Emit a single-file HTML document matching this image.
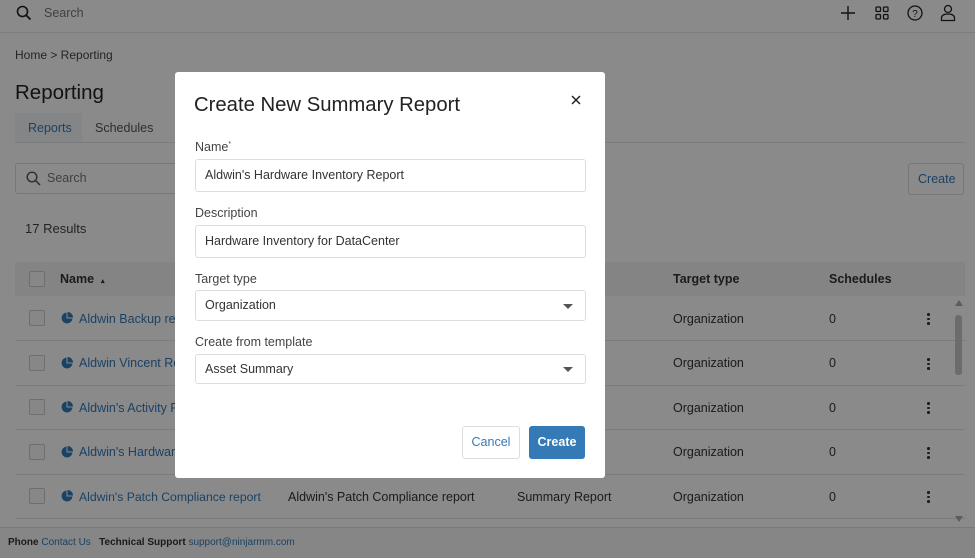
<!DOCTYPE html>
<html><head><meta charset="utf-8"><style>
*{box-sizing:border-box;margin:0;padding:0}
body{width:975px;height:558px;overflow:hidden;position:relative;background:#fff;font-family:"Liberation Sans",sans-serif;color:#333}
.abs{position:absolute}
.t{position:absolute;white-space:nowrap}
.link{color:#337ab7}
.row{position:absolute;left:15px;width:950px;height:45px;border-bottom:1px solid #e6e6e6}
.cb{position:absolute;left:14px;width:16px;height:16px;border:1px solid #ccc;border-radius:2px;background:#fafafa}
.overlay{position:absolute;left:0;top:0;width:975px;height:558px;background:rgba(0,0,0,0.46)}
.modal{position:absolute;left:175px;top:72px;width:430px;height:406px;background:#fff;border-radius:3px}
.lbl{position:absolute;left:20px;font-size:12.5px;color:#444}
.inp{position:absolute;left:20px;width:391px;border:1px solid #ddd;border-radius:3px;font-size:12.5px;color:#333;padding-left:9px}
.caret{position:absolute;right:12px;top:50%;margin-top:-2px;width:0;height:0;border-left:5px solid transparent;border-right:5px solid transparent;border-top:5px solid #555}
.kb{position:absolute;width:3px}
.kb i{display:block;width:2.5px;height:2.5px;background:#333;border-radius:50%;margin-bottom:2px}
</style></head><body>
<div class="abs" style="left:0;top:0;width:975px;height:33px;border-bottom:1px solid #e8e8e8"></div>
<svg class="abs" style="left:16px;top:5px" width="16" height="16" viewBox="0 0 16 16"><circle cx="6.5" cy="6.5" r="5" fill="none" stroke="#222" stroke-width="1.6"/><line x1="10.2" y1="10.2" x2="14.5" y2="14.5" stroke="#222" stroke-width="1.8"/></svg>
<div class="t" style="left:44px;top:6px;font-size:12.5px;color:#777">Search</div>
<svg class="abs" style="left:841px;top:6px" width="14" height="14"><path d="M7 0V14M0 7H14" stroke="#222" stroke-width="1.4"/></svg>
<svg class="abs" style="left:875px;top:6px" width="14" height="14"><g fill="none" stroke="#222" stroke-width="1.3"><rect x="1" y="1" width="4.5" height="4.5" rx="1"/><rect x="8.5" y="1" width="4.5" height="4.5" rx="1"/><rect x="1" y="8.5" width="4.5" height="4.5" rx="1"/><rect x="8.5" y="8.5" width="4.5" height="4.5" rx="1"/></g></svg>
<svg class="abs" style="left:907px;top:5px" width="16" height="16"><circle cx="8" cy="8" r="7" fill="none" stroke="#222" stroke-width="1.3"/><text x="8" y="12" font-size="10" text-anchor="middle" fill="#222" font-family="Liberation Sans">?</text></svg>
<svg class="abs" style="left:940px;top:4px" width="16" height="18"><circle cx="8" cy="5" r="3.5" fill="none" stroke="#222" stroke-width="1.3"/><path d="M1.5 16.5V14C1.5 11 4 10 8 10S14.5 11 14.5 14V16.5Z" fill="none" stroke="#222" stroke-width="1.3"/></svg>
<div class="t" style="left:15px;top:48px;font-size:12px;color:#444">Home &gt; Reporting</div>
<div class="t" style="left:15px;top:81px;font-size:20.5px;color:#222">Reporting</div>
<div class="abs" style="left:15px;top:113px;width:67px;height:29px;background:#f3f5f7"></div>
<div class="t link" style="left:28px;top:121px;font-size:12.5px">Reports</div>
<div class="t" style="left:95px;top:121px;font-size:12.5px;color:#555">Schedules</div>
<div class="abs" style="left:15px;top:142px;width:950px;height:1px;background:#e6e6e6"></div>
<div class="abs" style="left:15px;top:163px;width:300px;height:31px;border:1px solid #ddd;border-radius:3px"></div>
<svg class="abs" style="left:26px;top:171px" width="15" height="15"><circle cx="6" cy="6" r="4.8" fill="none" stroke="#555" stroke-width="1.4"/><line x1="9.5" y1="9.5" x2="14" y2="14" stroke="#555" stroke-width="1.5"/></svg>
<div class="t" style="left:47px;top:171px;font-size:12.5px;color:#777">Search</div>
<div class="abs" style="left:908px;top:163px;width:56px;height:32px;border:1px solid #ddd;border-radius:3px"></div>
<div class="t link" style="left:918px;top:172px;font-size:12.5px">Create</div>
<div class="t" style="left:25px;top:221px;font-size:13px;color:#444">17 Results</div>
<div class="abs" style="left:15px;top:262px;width:950px;height:34px;background:#f4f4f4"></div>
<div class="cb" style="left:29px;top:271px"></div>
<div class="t" style="left:60px;top:272px;font-size:12.5px;font-weight:bold;color:#333">Name &nbsp;<span style="font-size:7px">▴</span></div>
<div class="t" style="left:673px;top:272px;font-size:12.5px;font-weight:bold;color:#333">Target type</div>
<div class="t" style="left:829px;top:272px;font-size:12.5px;font-weight:bold;color:#333">Schedules</div>
<div class="row" style="top:296px"></div><div class="row" style="top:341px"></div><div class="row" style="top:385px"></div><div class="row" style="top:430px"></div><div class="row" style="top:474px"></div>
<div class="cb" style="left:29px;top:310px"></div><div class="cb" style="left:29px;top:355px"></div><div class="cb" style="left:29px;top:399px"></div><div class="cb" style="left:29px;top:444px"></div><div class="cb" style="left:29px;top:488px"></div>
<svg class="abs" style="left:61px;top:312px" width="12" height="12"><path d="M5.5 0.5A5.5 5.5 0 1 0 11.5 6.5H5.5Z M6.5 0V5.5H12A5.5 5.5 0 0 0 6.5 0Z" fill="#337ab7"/></svg>
<svg class="abs" style="left:61px;top:357px" width="12" height="12"><path d="M5.5 0.5A5.5 5.5 0 1 0 11.5 6.5H5.5Z M6.5 0V5.5H12A5.5 5.5 0 0 0 6.5 0Z" fill="#337ab7"/></svg>
<svg class="abs" style="left:61px;top:401px" width="12" height="12"><path d="M5.5 0.5A5.5 5.5 0 1 0 11.5 6.5H5.5Z M6.5 0V5.5H12A5.5 5.5 0 0 0 6.5 0Z" fill="#337ab7"/></svg>
<svg class="abs" style="left:61px;top:446px" width="12" height="12"><path d="M5.5 0.5A5.5 5.5 0 1 0 11.5 6.5H5.5Z M6.5 0V5.5H12A5.5 5.5 0 0 0 6.5 0Z" fill="#337ab7"/></svg>
<svg class="abs" style="left:61px;top:490px" width="12" height="12"><path d="M5.5 0.5A5.5 5.5 0 1 0 11.5 6.5H5.5Z M6.5 0V5.5H12A5.5 5.5 0 0 0 6.5 0Z" fill="#337ab7"/></svg>
<div class="t link" style="left:79px;top:312px;font-size:12.5px">Aldwin Backup report</div>
<div class="t link" style="left:79px;top:356px;font-size:12.5px">Aldwin Vincent Report</div>
<div class="t link" style="left:79px;top:401px;font-size:12.5px">Aldwin's Activity Report</div>
<div class="t link" style="left:79px;top:445px;font-size:12.5px">Aldwin's Hardware Report</div>
<div class="t link" style="left:79px;top:490px;font-size:12.2px">Aldwin's Patch Compliance report</div>
<div class="t" style="left:288px;top:490px;font-size:12.5px;color:#333">Aldwin's Patch Compliance report</div>
<div class="t" style="left:517px;top:490px;font-size:12.5px;color:#333">Summary Report</div>
<div class="t" style="left:673px;top:312px;font-size:12.5px;color:#333">Organization</div>
<div class="t" style="left:673px;top:356px;font-size:12.5px;color:#333">Organization</div>
<div class="t" style="left:673px;top:401px;font-size:12.5px;color:#333">Organization</div>
<div class="t" style="left:673px;top:445px;font-size:12.5px;color:#333">Organization</div>
<div class="t" style="left:673px;top:490px;font-size:12.5px;color:#333">Organization</div>
<div class="t" style="left:829px;top:312px;font-size:12.5px">0</div>
<div class="t" style="left:829px;top:356px;font-size:12.5px">0</div>
<div class="t" style="left:829px;top:401px;font-size:12.5px">0</div>
<div class="t" style="left:829px;top:445px;font-size:12.5px">0</div>
<div class="t" style="left:829px;top:490px;font-size:12.5px">0</div>
<div class="kb" style="left:927px;top:313px"><i></i><i></i><i></i></div>
<div class="kb" style="left:927px;top:358px"><i></i><i></i><i></i></div>
<div class="kb" style="left:927px;top:402px"><i></i><i></i><i></i></div>
<div class="kb" style="left:927px;top:447px"><i></i><i></i><i></i></div>
<div class="kb" style="left:927px;top:491px"><i></i><i></i><i></i></div>
<div class="abs" style="left:955px;top:300px;width:0;height:0;border-left:4px solid transparent;border-right:4px solid transparent;border-bottom:6px solid #aaa"></div>
<div class="abs" style="left:955px;top:315px;width:7px;height:60px;background:#c8c8c8;border-radius:3px"></div>
<div class="abs" style="left:955px;top:516px;width:0;height:0;border-left:4px solid transparent;border-right:4px solid transparent;border-top:6px solid #aaa"></div>
<div class="abs" style="left:0;top:527px;width:975px;height:31px;background:#f8f8f8;border-top:1px solid #e0e0e0"></div>
<div class="t" style="left:8px;top:537px;font-size:10px;color:#333"><b>Phone</b> <span class="link">Contact Us</span> &nbsp; <b>Technical Support</b> <span class="link">support@ninjarmm.com</span></div>
<div class="overlay"></div>
<div class="modal">
  <div class="t" style="left:19px;top:22px;font-size:20.3px;color:#222">Create New Summary Report</div>
  <svg class="abs" style="left:396px;top:23px" width="10" height="10"><path d="M1 1L9 9M9 1L1 9" stroke="#222" stroke-width="1.5"/></svg>
  <div class="lbl" style="top:68px">Name<sup style="font-size:7px">*</sup></div>
  <div class="inp" style="top:87px;height:33px;line-height:31px">Aldwin's Hardware Inventory Report</div>
  <div class="lbl" style="top:134px">Description</div>
  <div class="inp" style="top:153px;height:33px;line-height:31px">Hardware Inventory for DataCenter</div>
  <div class="lbl" style="top:200px">Target type</div>
  <div class="inp" style="top:218px;height:31px;line-height:29px">Organization<span class="caret"></span></div>
  <div class="lbl" style="top:263px">Create from template</div>
  <div class="inp" style="top:282px;height:30px;line-height:28px">Asset Summary<span class="caret"></span></div>
  <div class="abs" style="left:287px;top:354px;width:58px;height:33px;border:1px solid #ddd;border-radius:3px;text-align:center;line-height:31px;font-size:12.5px;color:#337ab7">Cancel</div>
  <div class="abs" style="left:354px;top:354px;width:56px;height:33px;background:#337ab7;border-radius:3px;text-align:center;line-height:33px;font-size:12.5px;color:#fff;font-weight:bold">Create</div>
</div>
</body></html>
